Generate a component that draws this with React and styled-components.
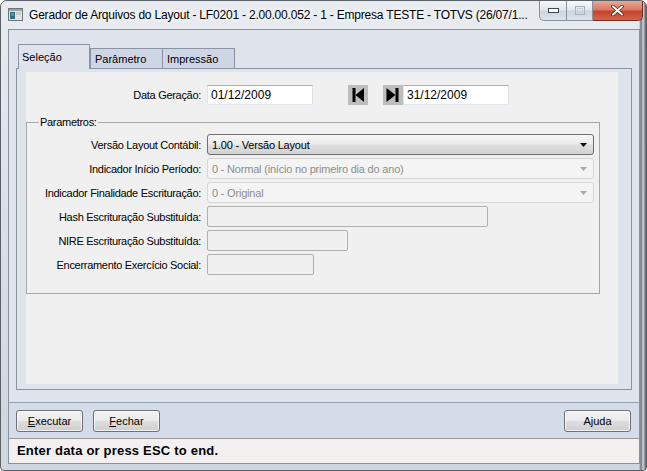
import React from "react";
import styled, { createGlobalStyle } from "styled-components";

const GlobalStyle = createGlobalStyle`
  html, body { margin: 0; padding: 0; background: #ffffff; }
  body { width: 647px; height: 471px; overflow: hidden; font-family: "Liberation Sans", Arial, sans-serif; }
  * { box-sizing: border-box; }
`;

const Window = styled.div`
  width: 647px;
  height: 471px;
  display: flex;
  flex-direction: column;
  border: 1px solid #5b6168;
  border-radius: 7px 7px 4px 4px;
  padding: 0 6px 6px 7px;
  background:
    linear-gradient(90deg, rgba(0,0,0,0) 638px, #6a7077 640px, #d4d8dd 642px, #565c63 645px),
    linear-gradient(180deg, #e8ecf1 0%, #d9dfe6 50%, #cfd6df 100%);
`;

const TitleBar = styled.div`
  height: 28px;
  display: flex;
  align-items: flex-start;
  flex-shrink: 0;
`;

const TitleIcon = styled.svg`
  margin-top: 7px;
  width: 15px;
  height: 13px;
  flex-shrink: 0;
`;

const TitleText = styled.div`
  margin-left: 6px;
  line-height: 28px;
  font-size: 12px;
  letter-spacing: -0.2px;
  color: #000;
  white-space: nowrap;
  overflow: hidden;
  font-family: "Liberation Sans", Arial, sans-serif;
  text-shadow: 0 0 8px #ffffff, 0 0 4px #ffffff;
`;

const Controls = styled.div`
  margin-left: auto;
  margin-right: -3px;
  display: flex;
  height: 20px;
  flex-shrink: 0;
`;

const CtrlButton = styled.div`
  width: ${(p) => p.$w}px;
  height: 20px;
  display: flex;
  align-items: center;
  justify-content: center;
  border: 1px solid ${(p) => (p.$close ? "#7a2d22" : "#8a929c")};
  border-top: none;
  border-left-width: ${(p) => (p.$first ? 1 : 0)}px;
  border-radius: ${(p) => (p.$first ? "0 0 0 5px" : p.$close ? "0 0 5px 0" : "0")};
  background: ${(p) =>
    p.$close
      ? "linear-gradient(180deg, #e9a99a 0%, #dc7a63 45%, #c6442c 55%, #d3644c 100%)"
      : "linear-gradient(180deg, #f6f8fa 0%, #e3e8ee 45%, #cdd5df 55%, #dde3ea 100%)"};
`;

const Client = styled.div`
  flex: 1;
  display: flex;
  flex-direction: column;
  border: 1px solid #8791a0;
  background: #dfe3eb;
`;

const TabArea = styled.div`
  padding: 14px 7px 0 7px;
  display: flex;
  flex-direction: column;
`;

const TabStrip = styled.div`
  display: flex;
  align-items: flex-end;
  padding-left: 2px;
  margin-bottom: -1px;
  position: relative;
  z-index: 1;
`;

const Tab = styled.div`
  width: ${(p) => p.$w}px;
  height: ${(p) => (p.$active ? 25 : 21)}px;
  border: 1px solid #8a93a1;
  border-bottom: ${(p) => (p.$active ? "none" : "1px solid #8a93a1")};
  border-left-width: ${(p) => (p.$noLeft ? 0 : 1)}px;
  background: ${(p) => (p.$active ? "#dfe3eb" : "#ced6e6")};
  font-size: 11px;
  color: #000;
  padding: ${(p) => (p.$active ? "6px 0 0 3px" : "4px 0 0 4px")};
  line-height: 13px;
  white-space: nowrap;
`;

const Panel = styled.div`
  height: 322px;
  border: 1px solid #8a93a1;
  background: #dfe3eb;
  padding: 3px 13px 5px 9px;
  display: flex;
`;

const Sheet = styled.div`
  flex: 1;
  background: #f0f0f0;
  display: flex;
  flex-direction: column;
`;

const DateRow = styled.div`
  margin-top: 13px;
  display: grid;
  grid-template-columns: 175px auto;
  column-gap: 6px;
  align-items: center;
  height: 20px;
`;

const Label = styled.div`
  text-align: right;
  font-size: 11px;
  letter-spacing: -0.3px;
  color: #000;
  white-space: nowrap;
`;

const Fields = styled.div`
  display: flex;
  align-items: center;
`;

const TextInput = styled.div`
  width: ${(p) => p.$w}px;
  height: ${(p) => p.$h || 20}px;
  border: 1px solid;
  border-color: ${(p) => (p.$disabled ? "#b0b0b0" : "#abadb3 #dbdfe6 #e3e9ef #e2e3ea")};
  border-radius: ${(p) => (p.$disabled ? 2 : 1)}px;
  background: ${(p) => (p.$disabled ? "#f0f0f0" : "#ffffff")};
  font-size: 12px;
  line-height: 18px;
  padding-left: 3px;
  color: #000;
  margin-left: ${(p) => p.$ml || 0}px;
`;

const NavButton = styled.div`
  width: 20px;
  height: 20px;
  background: #bdbdbd;
  margin-left: ${(p) => p.$ml || 0}px;
  display: flex;
`;

const Group = styled.fieldset`
  margin: 11px 18px 0 0;
  padding: 0;
  border: 1px solid #a8a8a8;
  min-width: 0;
`;

const Legend = styled.legend`
  margin-left: 12px;
  padding: 0 1px;
  font-size: 11px;
  line-height: 13px;
  letter-spacing: -0.3px;
  color: #000;
`;

const FormGrid = styled.div`
  display: grid;
  grid-template-columns: 174px auto;
  column-gap: 6px;
  row-gap: 3px;
  grid-auto-rows: 21px;
  align-items: center;
  padding: 5px 0 18px 0;
`;

const Select = styled.div`
  width: ${(p) => p.$w}px;
  height: 21px;
  display: flex;
  align-items: center;
  justify-content: space-between;
  padding: 0 6px 0 4px;
  border: 1px solid ${(p) => (p.$disabled ? "#d6d6d6" : "#707070")};
  border-radius: 3px;
  background: ${(p) =>
    p.$disabled
      ? "#f4f4f4"
      : "linear-gradient(180deg, #f6f6f6 0%, #ececec 45%, #dedede 55%, #d3d3d3 100%)"};
  color: ${(p) => (p.$disabled ? "#8d8d8d" : "#000")};
  font-size: 11px;
  letter-spacing: -0.2px;
  white-space: nowrap;
`;

const Footer = styled.div`
  margin-top: 12px;
  height: 36px;
  border-top: 1px solid #98a1b0;
  background: #d4dcea;
  display: flex;
  align-items: flex-start;
  padding: 7px 8px 0 7px;
  gap: 10px;
`;

const Button = styled.div`
  width: 67px;
  height: 22px;
  border: 1px solid #707070;
  border-radius: 3px;
  background: linear-gradient(180deg, #f2f2f2 0%, #ebebeb 48%, #dddddd 52%, #cfcfcf 100%);
  box-shadow: inset 0 0 0 1px rgba(255,255,255,0.7);
  display: flex;
  align-items: center;
  justify-content: center;
  font-size: 11px;
  color: #000;
  margin-left: ${(p) => (p.$right ? "auto" : "0")};
  & u { text-decoration: underline; }
`;

const StatusBar = styled.div`
  flex: 1;
  border-top: 1px solid #9a9a9a;
  background: #f3f1ef;
  padding-left: 8px;
  padding-bottom: 2px;
  display: flex;
  align-items: center;
  font-size: 13px;
  font-weight: bold;
  letter-spacing: 0.2px;
  color: #000;
`;

const Arrow = ({ color }) => (
  <svg width="7" height="4" viewBox="0 0 7 4">
    <polygon points="0,0 7,0 3.5,4" fill={color} />
  </svg>
);

export default function App() {
  return (
    <>
      <GlobalStyle />
      <Window>
        <TitleBar>
          <TitleIcon viewBox="0 0 15 13">
            <rect x="0.5" y="0.5" width="14" height="12" fill="#e4e4e4" stroke="#6f7478" />
            <rect x="1" y="1" width="13" height="2" fill="#9aa2aa" />
            <rect x="2" y="4" width="5" height="7" fill="#2f6d8a" />
            <rect x="3" y="5" width="3" height="3" fill="#4fa07c" />
            <rect x="8" y="4" width="5" height="3" fill="#c9cdd2" />
          </TitleIcon>
          <TitleText>Gerador de Arquivos do Layout - LF0201 - 2.00.00.052 - 1 - Empresa TESTE - TOTVS (26/07/1...</TitleText>
          <Controls>
            <CtrlButton $w={28} $first>
              <svg width="11" height="5" viewBox="0 0 11 5">
                <rect x="0.5" y="0.5" width="10" height="4" fill="#ffffff" stroke="#3d4650" />
              </svg>
            </CtrlButton>
            <CtrlButton $w={26}>
              <svg width="10" height="9" viewBox="0 0 10 9">
                <rect x="0.5" y="0.5" width="9" height="8" fill="none" stroke="#a8b0ba" />
                <rect x="2.5" y="2.5" width="5" height="4" fill="none" stroke="#c8ced6" />
              </svg>
            </CtrlButton>
            <CtrlButton $w={50} $close>
              <svg width="13" height="11" viewBox="0 0 13 11">
                <path d="M2 1.5 L11 9.5 M11 1.5 L2 9.5" stroke="#5a231a" strokeWidth="3.6" strokeLinecap="round" />
                <path d="M2 1.5 L11 9.5 M11 1.5 L2 9.5" stroke="#ffffff" strokeWidth="2" strokeLinecap="round" />
              </svg>
            </CtrlButton>
          </Controls>
        </TitleBar>
        <Client>
          <TabArea>
            <TabStrip>
              <Tab $w={72} $active>Seleção</Tab>
              <Tab $w={73}>Parâmetro</Tab>
              <Tab $w={72} $noLeft>Impressão</Tab>
            </TabStrip>
            <Panel>
              <Sheet>
                <DateRow>
                  <Label>Data Geração:</Label>
                  <Fields>
                    <TextInput $w={106}>01/12/2009</TextInput>
                    <NavButton $ml={35}>
                      <svg width="20" height="20" viewBox="0 0 20 20">
                        <rect x="4.5" y="3" width="3" height="14" fill="#000" />
                        <polygon points="7.5,10 16,3 16,17" fill="#000" />
                      </svg>
                    </NavButton>
                    <NavButton $ml={15}>
                      <svg width="20" height="20" viewBox="0 0 20 20">
                        <polygon points="3.5,3 12.5,10 3.5,17" fill="#000" />
                        <rect x="12.5" y="3" width="3" height="14" fill="#000" />
                      </svg>
                    </NavButton>
                    <TextInput $w={106}>31/12/2009</TextInput>
                  </Fields>
                </DateRow>
                <Group>
                  <Legend>Parametros:</Legend>
                  <FormGrid>
                    <Label>Versão Layout Contábil:</Label>
                    <Select $w={387}>
                      <span>1.00 - Versão Layout</span>
                      <Arrow color="#000" />
                    </Select>
                    <Label>Indicador Início Período:</Label>
                    <Select $w={387} $disabled>
                      <span>0 - Normal (início no primeiro dia do ano)</span>
                      <Arrow color="#a9a9a9" />
                    </Select>
                    <Label>Indicador Finalidade Escrituração:</Label>
                    <Select $w={387} $disabled>
                      <span>0 - Original</span>
                      <Arrow color="#a9a9a9" />
                    </Select>
                    <Label>Hash Escrituração Substituída:</Label>
                    <TextInput $w={281} $h={21} $disabled />
                    <Label>NIRE Escrituração Substituída:</Label>
                    <TextInput $w={141} $h={21} $disabled />
                    <Label>Encerramento Exercício Social:</Label>
                    <TextInput $w={107} $h={21} $disabled />
                  </FormGrid>
                </Group>
              </Sheet>
            </Panel>
          </TabArea>
          <Footer>
            <Button><span><u>E</u>xecutar</span></Button>
            <Button><span><u>F</u>echar</span></Button>
            <Button $right>Ajuda</Button>
          </Footer>
          <StatusBar>Enter data or press ESC to end.</StatusBar>
        </Client>
      </Window>
    </>
  );
}
